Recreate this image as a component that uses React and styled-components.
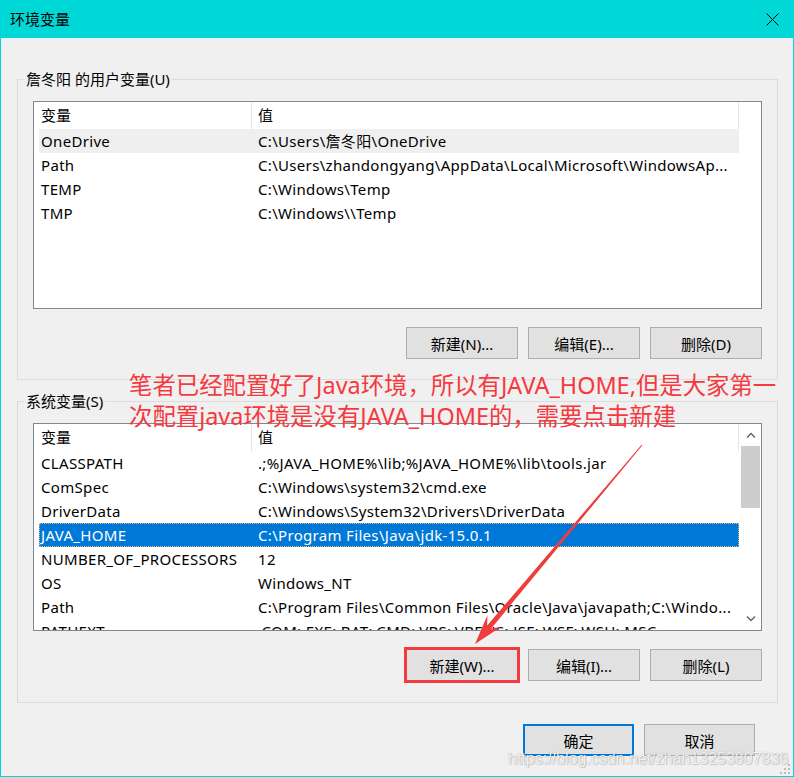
import React from 'react';
import styled, { createGlobalStyle } from 'styled-components';

const GlobalStyle = createGlobalStyle`
  html, body { margin: 0; padding: 0; background: #f0f0f0; }
  body { font-family: "Noto Sans", "Noto Sans CJK SC", sans-serif; }
`;

const Window = styled.div`
  position: relative;
  width: 794px;
  height: 777px;
  box-sizing: border-box;
  border: 1px solid #00d7d7;
  border-top: none;
  background: #f0f0f0;
  display: flex;
  flex-direction: column;
  overflow: hidden;
  font-family: "Noto Sans", "Noto Sans CJK SC", sans-serif;
  font-size: 15px;
  color: #000;
`;

const TitleBar = styled.div`
  height: 38px;
  flex: none;
  background: #00d7d7;
  margin: 0 -1px;
  padding: 0 15px 0 10px;
  display: flex;
  align-items: center;
  justify-content: space-between;
  font-size: 15px;
  line-height: 20px;
`;

const Content = styled.div`
  padding: 0 15px 0 16px;
  display: flex;
  flex-direction: column;
`;

const GroupBox = styled.div`
  margin-top: ${(p) => p.$top}px;
  border: 1px solid #dcdcdc;
  padding: 0 15px ${(p) => p.$bottom}px 15px;
  display: flex;
  flex-direction: column;
`;

const Legend = styled.div`
  width: fit-content;
  height: 20px;
  line-height: 20px;
  margin: -11px 0 0 -9px;
  padding: 0 2px;
  background: #f0f0f0;
`;

const ListBox = styled.div`
  margin-top: 12px;
  height: 208px;
  box-sizing: border-box;
  border: 1px solid #828790;
  background: #fff;
  display: flex;
  overflow: hidden;
`;

const Rows = styled.div`
  padding-left: 5px;
  width: 700px;
  flex: none;
  display: flex;
  flex-direction: column;
`;

const Header = styled.div`
  display: grid;
  grid-template-columns: 212px 488px;
  height: 27px;
  flex: none;
`;

const HeaderCell = styled.div`
  box-sizing: border-box;
  line-height: 27px;
  padding-left: ${(p) => (p.$second ? 6 : 2)}px;
  border-left: ${(p) => (p.$second ? '1px solid #e5e5e5' : 'none')};
  border-right: ${(p) => (p.$second ? '1px solid #e5e5e5' : 'none')};
`;

const Row = styled.div`
  display: grid;
  grid-template-columns: 212px 488px;
  height: 24px;
  flex: none;
  line-height: 24px;
  background: ${(p) => (p.$selected ? '#0078d7' : p.$hover ? '#efefef' : 'transparent')};
  color: ${(p) => (p.$selected ? '#fff' : '#000')};
  outline: ${(p) => (p.$selected ? '1px dotted #e9b979' : 'none')};
  outline-offset: -1px;
`;

const Cell = styled.div`
  box-sizing: border-box;
  white-space: nowrap;
  overflow: hidden;
  letter-spacing: 0.32px;
  padding-left: ${(p) => (p.$second ? 7 : 2)}px;
`;

const ScrollBar = styled.div`
  margin-left: 1px;
  width: 21px;
  flex: none;
  display: flex;
  flex-direction: column;
  align-items: center;
  background: #fff;
`;

const ScrollArrow = styled.div`
  height: 22px;
  width: 21px;
  display: flex;
  align-items: center;
  justify-content: center;
`;

const Thumb = styled.div`
  width: 19px;
  height: 62px;
  background: #cdcdcd;
`;

const ScrollSpace = styled.div`
  flex: 1;
`;

const ButtonRow = styled.div`
  margin-top: ${(p) => p.$top}px;
  padding-right: ${(p) => p.$right || 0}px;
  display: flex;
  justify-content: flex-end;
  gap: 10px;
`;

const Button = styled.button`
  width: ${(p) => p.$w}px;
  height: 32px;
  box-sizing: border-box;
  border: ${(p) => (p.$default ? '2px solid #0078d7' : '1px solid #adadad')};
  background: #e1e1e1;
  font-family: "Noto Sans", "Noto Sans CJK SC", sans-serif;
  font-size: 15px;
  color: #000;
  padding: 0;
  outline: ${(p) => (p.$marked ? '3px solid #f03c3c' : 'none')};
  outline-offset: -1px;
`;

const Annotation = styled.div`
  position: absolute;
  left: 128px;
  top: 370px;
  font-family: "Noto Sans", "Noto Sans CJK SC", sans-serif;
  font-size: 23.4px;
  line-height: 31px;
  color: #f5393e;
  white-space: nowrap;
`;

const Overlay = styled.svg`
  position: absolute;
  left: 0;
  top: 0;
  pointer-events: none;
`;

const Watermark = styled.div`
  position: absolute;
  left: 507px;
  top: 749px;
  font-family: "Liberation Sans", Arial, sans-serif;
  font-size: 16px;
  line-height: 20px;
  color: rgba(255, 255, 255, 0.9);
  text-shadow: 0 0 1px rgba(0, 0, 0, 0.35), 1px 1px 1px rgba(0, 0, 0, 0.15);
  white-space: nowrap;
`;

const Grip = styled.svg`
  position: absolute;
  right: 3px;
  bottom: 2px;
`;

const userVars = [
  { name: 'OneDrive', value: String.raw`C:\Users\詹冬阳\OneDrive`, hover: true },
  { name: 'Path', value: String.raw`C:\Users\zhandongyang\AppData\Local\Microsoft\WindowsAp...` },
  { name: 'TEMP', value: String.raw`C:\Windows\Temp` },
  { name: 'TMP', value: String.raw`C:\Windows\\Temp` },
];

const sysVars = [
  { name: 'CLASSPATH', value: String.raw` .;%JAVA_HOME%\lib;%JAVA_HOME%\lib\tools.jar` },
  { name: 'ComSpec', value: String.raw`C:\Windows\system32\cmd.exe` },
  { name: 'DriverData', value: String.raw`C:\Windows\System32\Drivers\DriverData` },
  { name: 'JAVA_HOME', value: String.raw`C:\Program Files\Java\jdk-15.0.1`, selected: true },
  { name: 'NUMBER_OF_PROCESSORS', value: '12' },
  { name: 'OS', value: 'Windows_NT' },
  { name: 'Path', value: String.raw`C:\Program Files\Common Files\Oracle\Java\javapath;C:\Windo...` },
  { name: 'PATHEXT', value: ' .COM;.EXE;.BAT;.CMD;.VBS;.VBE;.JS;.JSE;.WSF;.WSH;.MSC' },
];

function VarList({ vars, scroll }) {
  return (
    <ListBox>
      <Rows>
        <Header>
          <HeaderCell>变量</HeaderCell>
          <HeaderCell $second>值</HeaderCell>
        </Header>
        {vars.map((v) => (
          <Row key={v.name} $hover={v.hover} $selected={v.selected}>
            <Cell>{v.name}</Cell>
            <Cell $second>{v.value}</Cell>
          </Row>
        ))}
      </Rows>
      {scroll && (
        <ScrollBar>
          <ScrollArrow>
            <svg width="10" height="6" viewBox="0 0 10 6">
              <path d="M1 5.5 L5 1.5 L9 5.5" fill="none" stroke="#606060" strokeWidth="1.3" />
            </svg>
          </ScrollArrow>
          <Thumb />
          <ScrollSpace />
          <ScrollArrow>
            <svg width="10" height="6" viewBox="0 0 10 6">
              <path d="M1 0.5 L5 4.5 L9 0.5" fill="none" stroke="#606060" strokeWidth="1.3" />
            </svg>
          </ScrollArrow>
        </ScrollBar>
      )}
    </ListBox>
  );
}

export default function App() {
  return (
    <>
      <GlobalStyle />
      <Window>
        <TitleBar>
          <span>环境变量</span>
          <svg width="13" height="13" viewBox="0 0 13 13">
            <path d="M0.5 0.5 L12.5 12.5 M12.5 0.5 L0.5 12.5" stroke="#000" strokeWidth="1" />
          </svg>
        </TitleBar>
        <Content>
          <GroupBox $top={41} $bottom={20}>
            <Legend>詹冬阳 的用户变量(U)</Legend>
            <VarList vars={userVars} />
            <ButtonRow $top={18}>
              <Button $w={112}>新建(N)...</Button>
              <Button $w={112}>编辑(E)...</Button>
              <Button $w={112}>删除(D)</Button>
            </ButtonRow>
          </GroupBox>
          <GroupBox $top={21} $bottom={21}>
            <Legend>系统变量(S)</Legend>
            <VarList vars={sysVars} scroll />
            <ButtonRow $top={18}>
              <Button $w={112} $marked>新建(W)...</Button>
              <Button $w={112}>编辑(I)...</Button>
              <Button $w={112}>删除(L)</Button>
            </ButtonRow>
          </GroupBox>
          <ButtonRow $top={21} $right={23}>
            <Button $w={111} $default>确定</Button>
            <Button $w={111}>取消</Button>
          </ButtonRow>
        </Content>
        <Annotation>
          <div>笔者已经配置好了Java环境，所以有JAVA_HOME,但是大家第一</div>
          <div>次配置java环境是没有JAVA_HOME的，需要点击新建</div>
        </Annotation>
        <Overlay width="794" height="777" viewBox="0 0 794 777">
          <polygon
            points="641.4,445.3 490.0,628.7 500.2,626.8 474,644 486.4,615.2 486.2,625.5 640.6,444.7"
            fill="#f03c3c"
          />
        </Overlay>
        <Watermark>https://blog.csdn.net/zhan13253807836</Watermark>
        <Grip width="10" height="10" viewBox="0 0 10 10">
          <g fill="#bdbdbd">
            <rect x="8" y="0" width="2" height="2" />
            <rect x="4" y="4" width="2" height="2" />
            <rect x="8" y="4" width="2" height="2" />
            <rect x="0" y="8" width="2" height="2" />
            <rect x="4" y="8" width="2" height="2" />
            <rect x="8" y="8" width="2" height="2" />
          </g>
        </Grip>
      </Window>
    </>
  );
}
